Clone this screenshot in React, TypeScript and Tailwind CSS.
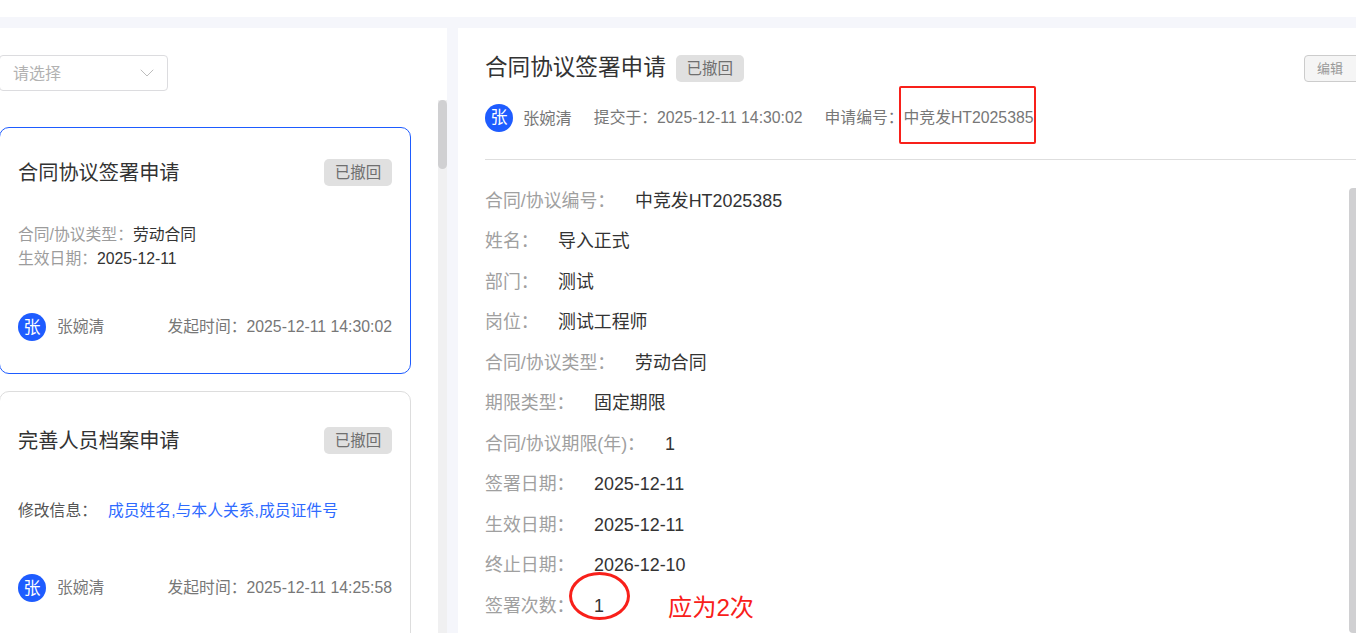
import { ChevronDown } from 'lucide-react';

const font = 'font-["Liberation_Sans","Noto_Sans_CJK_SC",sans-serif]';

const detailRows = [
  { label: '合同/协议编号：', value: '中竞发HT2025385', labelWidth: 'w-[150px]' },
  { label: '姓名：', value: '导入正式', labelWidth: 'w-[73px]' },
  { label: '部门：', value: '测试', labelWidth: 'w-[73px]' },
  { label: '岗位：', value: '测试工程师', labelWidth: 'w-[73px]' },
  { label: '合同/协议类型：', value: '劳动合同', labelWidth: 'w-[150px]' },
  { label: '期限类型：', value: '固定期限', labelWidth: 'w-[109px]' },
  { label: '合同/协议期限(年)：', value: '1', labelWidth: 'w-[180px]' },
  { label: '签署日期：', value: '2025-12-11', labelWidth: 'w-[109px]' },
  { label: '生效日期：', value: '2025-12-11', labelWidth: 'w-[109px]' },
  { label: '终止日期：', value: '2026-12-10', labelWidth: 'w-[109px]' },
  { label: '签署次数：', value: '1', labelWidth: 'w-[109px]' },
];

function Avatar() {
  return (
    <div className="flex h-7 w-7 shrink-0 items-center justify-center rounded-full bg-[#1e5cff] text-[17px] text-white">
      张
    </div>
  );
}

function StatusTag({ className = '' }: { className?: string }) {
  return (
    <span className={`flex h-[27px] w-[68px] items-center justify-center rounded-[5px] bg-[#e0e0e0] text-[15.5px] text-[#6f6f6f] ${className}`}>
      已撤回
    </span>
  );
}

function CardFooter({ time }: { time: string }) {
  return (
    <div className="flex items-center justify-between">
      <div className="flex items-center gap-[11px]">
        <Avatar />
        <span className="text-[#777]">张婉清</span>
      </div>
      <span className="text-[#777]">发起时间：{time}</span>
    </div>
  );
}

export default function App() {
  return (
    <div className={`relative h-[633px] w-[1356px] overflow-hidden bg-white text-[15.8px] ${font}`}>
      <div className="h-[17px] bg-white" />
      <div className="flex h-[616px] gap-[11px] bg-[#f5f6fb] pt-[11px]">
        {/* Left list */}
        <aside className="flex w-[447px] shrink-0 bg-white">
          <div className="-ml-px w-[439px] shrink-0">
            <div className="mt-[27px] flex h-9 w-[169px] items-center justify-between rounded-[4px] border border-[#dcdcdf] pl-[13px] pr-[8px] text-[#b2b2b2]">
              <span className="pt-px text-[16px] leading-9">请选择</span>
              <ChevronDown className="h-6 w-6 text-[#b5b5b5]" strokeWidth={0.9} />
            </div>

            <div className="mt-9 flex h-[247px] w-[412px] flex-col rounded-[10px] border border-[#1e5cff] px-[18px]">
              <div className="mt-[30px] flex items-center justify-between">
                <h3 className="text-[20.2px] font-normal text-[#333]">合同协议签署申请</h3>
                <StatusTag className="-mt-[2px]" />
              </div>
              <div className="mt-[35px] leading-6 text-[#333]">
                <div><span className="text-[#9c9c9c]">合同/协议类型：</span>劳动合同</div>
                <div><span className="text-[#9c9c9c]">生效日期：</span>2025-12-11</div>
              </div>
              <div className="mt-[42px]">
                <CardFooter time="2025-12-11 14:30:02" />
              </div>
            </div>

            <div className="mt-[17px] flex h-[260px] w-[412px] flex-col rounded-[10px] border border-[#dddddd] px-[18px]">
              <div className="mt-[34px] flex items-center justify-between">
                <h3 className="text-[20.2px] font-normal text-[#333]">完善人员档案申请</h3>
                <StatusTag className="-mt-[2px]" />
              </div>
              <div className="mt-[43px] flex leading-6">
                <span className="w-[90px] text-[#555]">修改信息：</span>
                <span className="text-[#2f6bff]">成员姓名,与本人关系,成员证件号</span>
              </div>
              <div className="mt-[51px]">
                <CardFooter time="2025-12-11 14:25:58" />
              </div>
            </div>
          </div>
          {/* Scrollbar */}
          <div className="mt-[72px] flex w-[9px] flex-col bg-[#f0f0f1]">
            <div className="h-[69px] rounded-full bg-[#d0d0d2]" />
          </div>
        </aside>

        {/* Detail */}
        <main className="relative flex-1 bg-white pl-[27px]">
          <div className="mt-[27px] flex items-center justify-between">
            <div className="flex items-center gap-[10px]">
              <h2 className="-mt-[3px] text-[22.6px] font-normal leading-[27px] text-[#333]">合同协议签署申请</h2>
              <StatusTag />
            </div>
            <button className="-mr-1 flex h-[27px] w-[56px] items-center rounded-[4px] border border-[#ccc] bg-[#f5f5f5] pl-[12px] text-[13px] text-[#999]">
              编辑
            </button>
          </div>
          <div className="mt-[22px] flex items-center text-[#777]">
            <Avatar />
            <span className="ml-[10px] text-[16.3px]">张婉清</span>
            <span className="ml-[22px]">提交于：2025-12-11 14:30:02</span>
            <span className="ml-[22px]">申请编号：中竞发HT2025385</span>
          </div>
          <div className="mt-[27px] border-t border-[#dedede]" />
          <div className="mt-[21px] text-[17.9px]">
            {detailRows.map((row) => (
              <div key={row.label} className="flex h-[40.5px] items-center">
                <span className={`${row.labelWidth} shrink-0 text-[#a0a0a0]`}>{row.label}</span>
                <span className="text-[#333]">{row.value}</span>
              </div>
            ))}
          </div>
          {/* Scrollbar */}
          <div className="absolute bottom-0 right-0 top-[160px] w-[7px] rounded-l-[4px] bg-[#d0d0d2]" />
        </main>
      </div>

      {/* Review annotations */}
      <div className="absolute left-[899px] top-[86px] h-[58px] w-[137px] rounded-[2px] border-2 border-[#f8201a]" />
      <div className="absolute left-[569px] top-[572px] h-[48px] w-[61px] rounded-[50%] border-[3px] border-[#f8201a]" />
      <div className="absolute left-[668px] top-[592px] text-[24.2px] leading-8 text-[#f8201a]">应为2次</div>
    </div>
  );
}
